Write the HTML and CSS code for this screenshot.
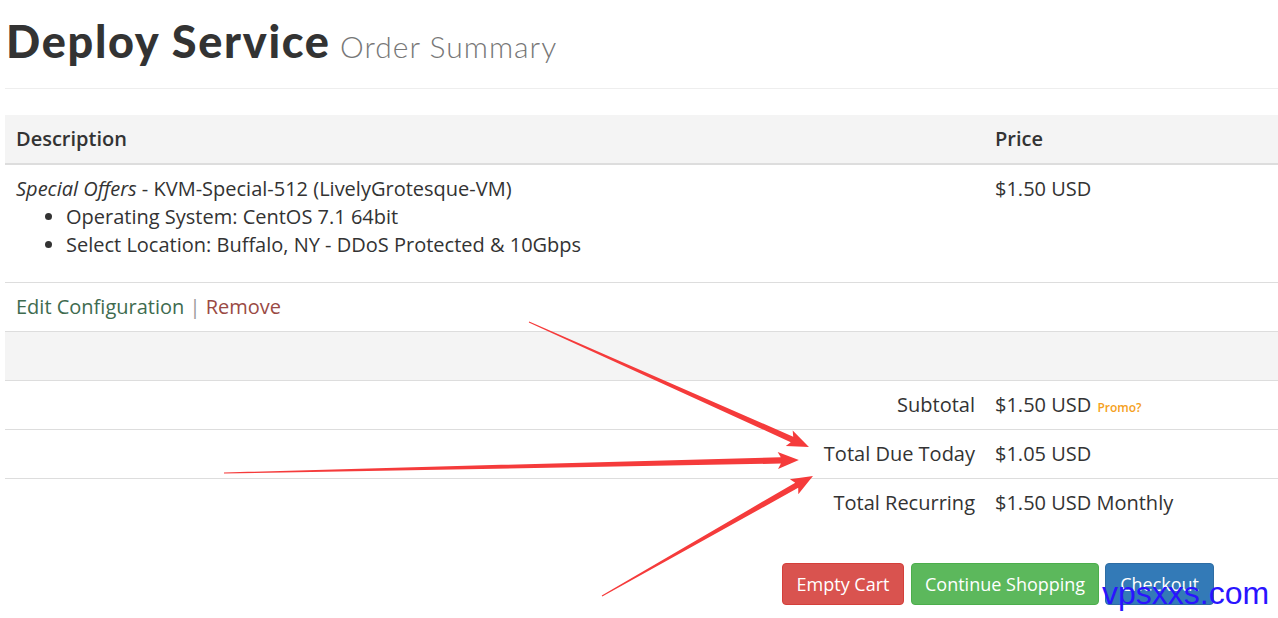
FILE: index.html
```html
<!DOCTYPE html>
<html>
<head>
<meta charset="utf-8">
<link rel="stylesheet" href="styles.css">
</head>
<body>
<div class="page">
  <div class="page-header">
    <h1 class="title">Deploy Service <small class="subtitle">Order Summary</small></h1>
  </div>
  <table class="cart">
    <thead>
      <tr><th class="col-desc">Description</th><th class="col-price">Price</th></tr>
    </thead>
    <tbody>
      <tr class="item">
        <td>
          <em>Special Offers</em> - KVM-Special-512 (LivelyGrotesque-VM)
          <ul class="opts">
            <li>Operating System: CentOS 7.1 64bit</li>
            <li>Select Location: Buffalo, NY - DDoS Protected &amp; 10Gbps</li>
          </ul>
        </td>
        <td>$1.50 USD</td>
      </tr>
      <tr class="actions">
        <td colspan="2"><a class="edit">Edit Configuration</a> <span class="sep">|</span> <a class="remove">Remove</a></td>
      </tr>
      <tr class="blank"><td colspan="2"></td></tr>
      <tr class="total"><td class="label">Subtotal</td><td>$1.50 USD <a class="promo">Promo?</a></td></tr>
      <tr class="total"><td class="label">Total Due Today</td><td>$1.05 USD</td></tr>
      <tr class="total last"><td class="label">Total Recurring</td><td>$1.50 USD Monthly</td></tr>
    </tbody>
  </table>
  <div class="buttons">
    <a class="btn btn-danger">Empty Cart</a>
    <a class="btn btn-success">Continue Shopping</a>
    <a class="btn btn-primary">Checkout</a>
  </div>
</div>
<svg class="arrows" width="1278" height="618" viewBox="0 0 1278 618">
  <g fill="#f53b3b">
    <polygon transform="translate(529,322) rotate(24.06)" points="0,-0.5 288,-3 285,-8.5 306.6,0 285,8.5 288,3 0,0.5"/>
    <polygon transform="translate(224,473) rotate(-1.3)" points="0,-0.5 557,-3.2 554,-8.5 575,0 554,8.5 557,3.2 0,0.5"/>
    <polygon transform="translate(602,596) rotate(-29.63)" points="0,-0.5 224,-3 221,-8.5 242.7,0 221,8.5 224,3 0,0.5"/>
  </g>
</svg>
<div class="watermark">vpsxxs.com</div>
</body>
</html>
```
FILE: styles.css
```css
html, body {
  margin: 0;
  padding: 0;
  background: #fff;
}
body {
  font-family: "Open Sans", "Liberation Sans", sans-serif;
  color: #333;
  font-size: 20px;
  width: 1278px;
  height: 618px;
  overflow: hidden;
  position: relative;
}
.page {
  padding-left: 5px;
}
.page-header {
  border-bottom: 1px solid #eee;
  height: 89px;
  box-sizing: border-box;
  padding-top: 14px;
}
.title {
  margin: 0;
  font-family: "Lato", "Liberation Sans", sans-serif;
  font-weight: 900;
  font-size: 45px;
  line-height: 54px;
  color: #333;
  padding-left: 1px;
  letter-spacing: 1.7px;
}
.subtitle {
  font-weight: 300;
  font-size: 30px;
  color: #777;
  margin-left: -3px;
  letter-spacing: 1px;
}
.cart {
  width: 1273px;
  border-collapse: collapse;
  margin-top: 26px;
}
.cart th {
  background: #f4f4f4;
  text-align: left;
  font-weight: 600;
  padding: 10px 11px;
  line-height: 28px;
  border-bottom: 2px solid #ddd;
}
.col-price {
  width: 272px;
}
.cart td {
  padding: 10px 11px;
  line-height: 28px;
  vertical-align: top;
  border-top: 1px solid #ddd;
}
.item td {
  border-top: none;
  padding-bottom: 23px;
}
.opts {
  margin: 0;
  padding-left: 50px;
}
.edit {
  color: #3e6b4f;
}
.sep {
  color: #999;
}
.remove {
  color: #9a4a44;
}
.blank td {
  background: #f4f4f4;
  height: 28px;
}
.total .label {
  text-align: right;
  padding-right: 9px;
}
.promo {
  color: #f5a020;
  font-size: 12px;
  font-weight: 600;
  line-height: 0;
  margin-left: 1px;
}
.buttons {
  display: flex;
  justify-content: flex-end;
  gap: 6px;
  padding-right: 64px;
  margin-top: 36px;
}
.btn {
  display: block;
  color: #fff;
  font-size: 18px;
  line-height: 24px;
  padding: 8px 14px;
  border-radius: 4px;
  border: 1px solid transparent;
}
.btn-danger {
  background: #d9534f;
  border-color: #d43f3a;
  padding: 8px 13.5px;
  margin-right: 1px;
}
.btn-success {
  background: #5cb85c;
  border-color: #4cae4c;
  padding: 8px 13px;
}
.btn-primary {
  background: #337ab7;
  border-color: #2e6da4;
}
.arrows {
  position: absolute;
  left: 0;
  top: 0;
  pointer-events: none;
}
.watermark {
  position: absolute;
  left: 1102px;
  top: 573px;
  font-family: "Liberation Sans", Arial, sans-serif;
  font-size: 32px;
  line-height: 40px;
  color: #2a14ff;
}
```
